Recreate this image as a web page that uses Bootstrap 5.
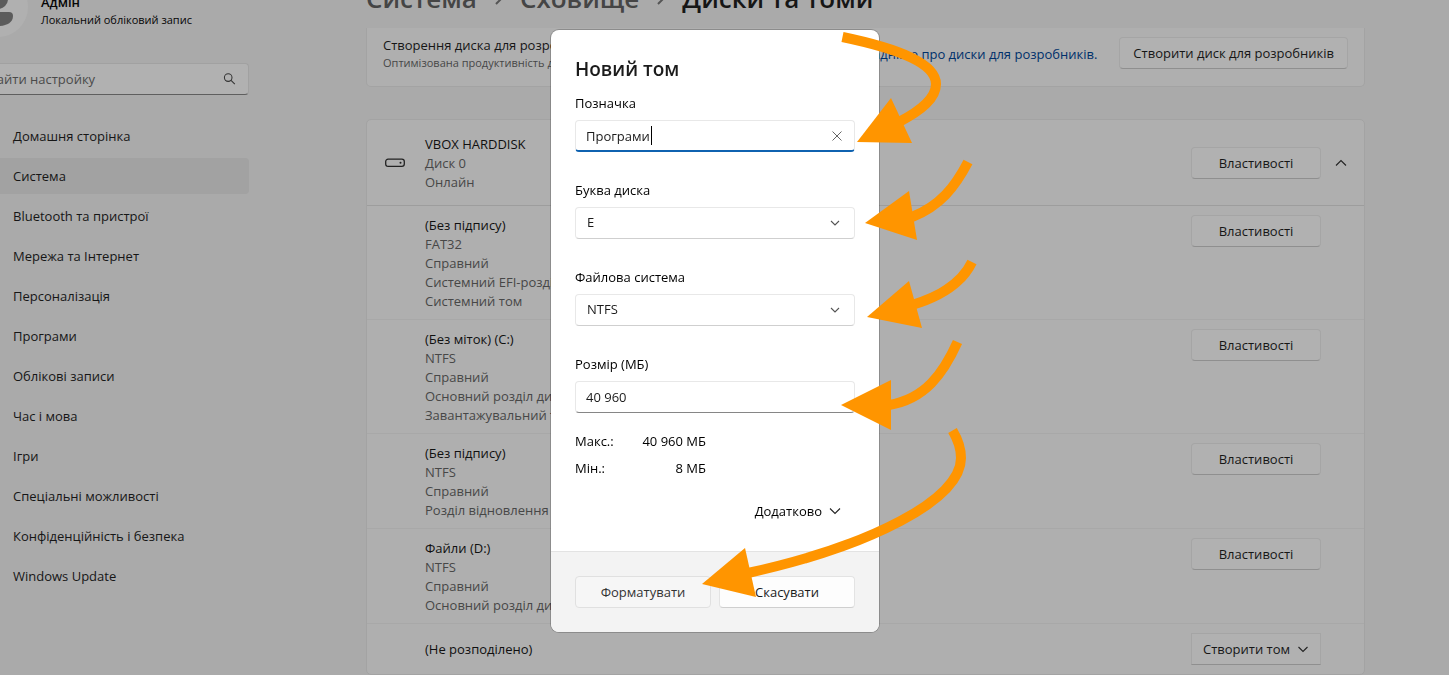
<!DOCTYPE html>
<html lang="uk">
<head>
<meta charset="utf-8">
<meta name="viewport" content="width=device-width, initial-scale=1">
<title>Диски та томи</title>
<link href="https://cdn.jsdelivr.net/npm/bootstrap@5.3.0/dist/css/bootstrap.min.css" rel="stylesheet">
<style>
  body { background: #aaa; color: #161616; font-family: "Open Sans", "Noto Sans", sans-serif; font-size: 13px; line-height: 19px; overflow: hidden; min-height: 100vh; }
  /* The window is scrolled a little: its first rows start above the edge */
  .window-view { margin-top: -24px; }
  .side-pane { width: 269px; margin-left: -20px; flex: none; }
  .profile { height: 87px; padding-top: 1px; }
  .avatar { width: 60px; height: 60px; margin-left: -12px; margin-right: 13px; flex: none; }
  .profile-text { line-height: 17px; font-size: 11px; padding-top: 17px; color: #060606; }
  .profile-name { font-size: 13px; font-weight: 600; }
  .search-box { background: #b1b1b1; border: 1px solid #a1a1a1; border-bottom-color: #5f5f5f; border-radius: 4px; height: 32px; padding: 0 12px 0 0; margin-bottom: 23px; }
  .search-box input { background: none; border: 0; outline: 0; padding: 0; width: 100%; color: #4a4a4a; }
  .search-box input::placeholder { color: #4a4a4a; opacity: 1; }
  .side-menu { gap: 4px; }
  .side-menu .nav-link { color: #161616; height: 36px; line-height: 36px; padding: 0 0 0 33px; border-radius: 4px; }
  .side-menu .nav-link.active { background: #a2a2a2; }
  .content-pane { margin: 0 84px 0 117px; min-width: 0; }
  .crumbs { height: 52px; padding-bottom: 9px; font-size: 26px; line-height: 38px; font-weight: 600; white-space: nowrap; }
  .crumbs a { color: #454545; text-decoration: none; }
  .crumbs svg { margin: 0 15px 0 16px; }
  .panel-box { background: #afafaf; border: 1px solid #a3a3a3; border-radius: 5px; }
  .dev-drive { border-top: 0; border-radius: 0 0 5px 5px; height: 59px; padding: 0 16px 8px; margin-bottom: 32px; white-space: nowrap; }
  .dev-text { padding-top: 2px; line-height: 18px; }
  .dev-sub { font-size: 11px; color: #474747; }
  .dev-drive a { color: #00306b; text-decoration: none; margin-right: 22px; padding-top: 2px; }
  .win-btn { background: #b1b1b1; border: 1px solid #a5a5a5; border-bottom-color: #8f8f8f; border-radius: 4px; color: #161616; font-size: 13px; line-height: 18px; height: 32px; padding: 0 11px; white-space: nowrap; }
  .win-btn.wide { padding: 0 13px; }
  .win-btn.fixed { width: 130px; }
  .vol-row { border-bottom: 1px solid #a8a8a8; padding: 9px 43px 8px 58px; color: #474747; }
  .vol-row:last-child { border-bottom: 0; padding-bottom: 9px; }
  .vol-info { padding-top: 1px; }
  .disk-head { border-bottom-color: #9d9d9d; height: 86px; padding: 0 16px 0 18px; }
  .disk-head .vol-info { padding-top: 2px; }
  .disk-head .disk-icon { margin-right: 20px; }
  .disk-head .win-btn { margin-right: 13px; }
  .vol-name { color: #101010; }
  .bare-btn { background: none; border: 0; padding: 0; line-height: 0; color: inherit; }
  .modal { right: 19px; width: auto; overflow: visible; }
  .modal-dialog { width: 328px; margin: 30px auto; color: #000; }
  .modal-content { border: 0; border-radius: 8px; box-shadow: 0 0 0 1px rgba(0,0,0,.2); overflow: hidden; pointer-events: auto; color: #111; }
  .modal-body { padding: 25px 24px 24px; }
  .modal-body h1 { font-size: 19px; line-height: 28px; font-weight: 600; color: #1b1b1b; margin-bottom: 10px; }
  .field { margin-bottom: 28px; }
  .field label { display: block; line-height: 20px; margin-bottom: 7px; color: #000; }
  .field-box { position: relative; }
  .field .form-control, .field .form-select { height: 32px; border: 1px solid #e8e8e8; border-radius: 4px; padding: 0 10px; font-size: 13px; color: #1b1b1b; background-color: #fff; box-shadow: none; }
  .field .form-select { border-bottom-color: #cfcfcf; padding-left: 11px; background-image: url("data:image/svg+xml,%3Csvg xmlns='http://www.w3.org/2000/svg' viewBox='0 0 10 10'%3E%3Cpath d='M1 3l4 4 4-4' fill='none' stroke='%23555' stroke-width='1.1'/%3E%3C/svg%3E"); background-size: 10px 10px; background-position: right 14px center; }
  .field .form-control { border-bottom-color: #868686; }
  .field .form-control.current { border-bottom: 2px solid #0f62b0; padding-right: 36px; }
  .clear-btn { position: absolute; right: 13px; top: 11px; color: #666; }
  .caret { position: absolute; left: 76px; top: 6px; width: 1px; height: 19px; background: #000; }
  .limits { width: 131px; line-height: 27px; margin: -13px 0 13px; color: #000; }
  .limits dt { font-weight: 400; }
  .more-btn { height: 32px; padding: 0 14px; color: #000; line-height: 20px; gap: 7px; }
  .modal-footer { background: #f3f3f3; border-top: 1px solid #e3e3e3; padding: 24px; gap: 8px; flex-wrap: nowrap; }
  .modal-footer .win-btn { background: #fdfdfd; border-color: #e3e3e3; border-bottom-color: #cfcfcf; margin: 0; flex: 1 1 0; color: #1b1b1b; }
  .modal-footer .win-btn.pressed { background: #f6f6f6; border-color: #e0e0e0; color: #333; }
  .pointers { position: absolute; left: 0; top: 0; width: 430px; height: 602px; pointer-events: none; }
</style>
</head>
<body>
<div class="window-view d-flex">
  <aside class="side-pane">
    <div class="profile d-flex align-items-start">
      <svg class="avatar" viewBox="0 0 60 60" aria-hidden="true">
        <circle cx="30" cy="30" r="30" fill="#b0b0b0"/>
        <circle cx="30" cy="22" r="10" fill="#5b5b5b"/>
        <path d="M19 35h22q4 0 4 4c0 7-7 10-15 10s-15-3-15-10q0-4 4-4z" fill="#5b5b5b"/>
      </svg>
      <div class="profile-text">
        <div class="profile-name">Адмін</div>
        <div>Локальний обліковий запис</div>
      </div>
    </div>
    <div class="search-box d-flex align-items-center">
      <input type="search" placeholder="Знайти настройку" aria-label="Знайти настройку">
      <svg width="14" height="14" viewBox="0 0 14 14" fill="none" stroke="#333" stroke-width="1.1"><circle cx="5.500" cy="5.500" r="4"/><path d="M8.500 8.500l4 4"/></svg>
    </div>
    <nav class="side-menu nav flex-column">
      <a class="nav-link" href="#">Домашня сторінка</a>
      <a class="nav-link active" href="#">Система</a>
      <a class="nav-link" href="#">Bluetooth та пристрої</a>
      <a class="nav-link" href="#">Мережа та Інтернет</a>
      <a class="nav-link" href="#">Персоналізація</a>
      <a class="nav-link" href="#">Програми</a>
      <a class="nav-link" href="#">Облікові записи</a>
      <a class="nav-link" href="#">Час і мова</a>
      <a class="nav-link" href="#">Ігри</a>
      <a class="nav-link" href="#">Спеціальні можливості</a>
      <a class="nav-link" href="#">Конфіденційність і безпека</a>
      <a class="nav-link" href="#">Windows Update</a>
    </nav>
  </aside>

  <main class="content-pane flex-grow-1">
    <div class="crumbs d-flex align-items-center">
      <a href="#">Система</a>
      <svg width="12" height="16" viewBox="0 0 12 16" fill="none" stroke="#555" stroke-width="2"><path d="M3 2l6 6-6 6"/></svg>
      <a href="#">Сховище</a>
      <svg width="12" height="16" viewBox="0 0 12 16" fill="none" stroke="#555" stroke-width="2"><path d="M3 2l6 6-6 6"/></svg>
      <span>Диски та томи</span>
    </div>

    <section class="panel-box dev-drive d-flex align-items-center">
      <div class="dev-text me-auto">
        <div>Створення диска для розробників</div>
        <div class="dev-sub">Оптимізована продуктивність для розробників</div>
      </div>
      <a href="#">Докладніше про диски для розробників.</a>
      <button type="button" class="win-btn wide">Створити диск для розробників</button>
    </section>

    <section class="panel-box">
      <div class="vol-row disk-head d-flex align-items-center">
        <svg class="disk-icon" width="20" height="10" viewBox="0 0 20 10" fill="none" stroke="#222" stroke-width="1.3"><rect x=".7" y="1.200" width="18.600" height="7.200" rx="2.400"/><circle cx="15.500" cy="4.800" r="1" fill="#222" stroke="none"/></svg>
        <div class="vol-info me-auto">
          <div class="vol-name">VBOX HARDDISK</div>
          <div>Диск 0</div>
          <div>Онлайн</div>
        </div>
        <button type="button" class="win-btn fixed">Властивості</button>
        <button type="button" class="bare-btn" aria-label="Згорнути"><svg width="14" height="10" viewBox="0 0 14 10" fill="none" stroke="#222" stroke-width="1.1"><path d="M2 7.500l5-5 5 5"/></svg></button>
      </div>
      <div class="vol-row d-flex align-items-start">
        <div class="vol-info me-auto">
          <div class="vol-name">(Без підпису)</div>
          <div>FAT32</div>
          <div>Справний</div>
          <div>Системний EFI-розділ</div>
          <div>Системний том</div>
        </div>
        <button type="button" class="win-btn fixed">Властивості</button>
      </div>
      <div class="vol-row d-flex align-items-start">
        <div class="vol-info me-auto">
          <div class="vol-name">(Без міток) (C:)</div>
          <div>NTFS</div>
          <div>Справний</div>
          <div>Основний розділ диска</div>
          <div>Завантажувальний том</div>
        </div>
        <button type="button" class="win-btn fixed">Властивості</button>
      </div>
      <div class="vol-row d-flex align-items-start">
        <div class="vol-info me-auto">
          <div class="vol-name">(Без підпису)</div>
          <div>NTFS</div>
          <div>Справний</div>
          <div>Розділ відновлення</div>
        </div>
        <button type="button" class="win-btn fixed">Властивості</button>
      </div>
      <div class="vol-row d-flex align-items-start">
        <div class="vol-info me-auto">
          <div class="vol-name">Файли (D:)</div>
          <div>NTFS</div>
          <div>Справний</div>
          <div>Основний розділ диска</div>
        </div>
        <button type="button" class="win-btn fixed">Властивості</button>
      </div>
      <div class="vol-row d-flex align-items-center">
        <div class="vol-info vol-name me-auto">(Не розподілено)</div>
        <button type="button" class="win-btn fixed rounded-0 d-flex align-items-center justify-content-between">Створити том
          <svg width="12" height="10" viewBox="0 0 12 10" fill="none" stroke="#222" stroke-width="1.1"><path d="M1.500 3l4.500 4.500 4.500-4.500"/></svg></button>
      </div>
    </section>
  </main>
</div>

<div class="modal d-block" role="dialog" aria-labelledby="dialogTitle">
  <div class="modal-dialog">
    <form class="modal-content">
      <div class="modal-body">
        <h1 id="dialogTitle">Новий том</h1>
        <div class="field">
          <label for="volLabel">Позначка</label>
          <div class="field-box">
            <input id="volLabel" class="form-control current" type="text" value="Програми">
            <span class="caret"></span>
            <button type="button" class="bare-btn clear-btn" aria-label="Очистити"><svg width="10" height="10" viewBox="0 0 10 10" fill="none" stroke="currentColor"><path d="M.5.5l9 9M9.500.5l-9 9"/></svg></button>
          </div>
        </div>
        <div class="field">
          <label for="volLetter">Буква диска</label>
          <select id="volLetter" class="form-select"><option>E</option></select>
        </div>
        <div class="field">
          <label for="volFs">Файлова система</label>
          <select id="volFs" class="form-select"><option>NTFS</option></select>
        </div>
        <div class="field">
          <label for="volSize">Розмір (МБ)</label>
          <input id="volSize" class="form-control" type="text" value="40 960">
        </div>
        <dl class="limits">
          <div class="d-flex justify-content-between"><dt>Макс.:</dt><dd class="m-0">40 960 МБ</dd></div>
          <div class="d-flex justify-content-between"><dt>Мін.:</dt><dd class="m-0">8 МБ</dd></div>
        </dl>
        <button type="button" class="bare-btn more-btn d-flex align-items-center ms-auto">Додатково
          <svg width="12" height="10" viewBox="0 0 12 10" fill="none" stroke="#222" stroke-width="1.1"><path d="M1 2.500l5 5 5-5"/></svg></button>
      </div>
      <div class="modal-footer">
        <button type="button" class="win-btn pressed">Форматувати</button>
        <button type="button" class="win-btn">Скасувати</button>
      </div>
    </form>
    <svg class="pointers" viewBox="551 30 430 602" aria-hidden="true">
      <g fill="none" stroke="#ff9500" stroke-width="10">
        <path d="M842.500 37C900 49 936 64 936 84C936 98 922 110 899 122"/>
        <path d="M968 162C955 187 940 206 912 217"/>
        <path d="M972 262C962 283 942 296 912 305"/>
        <path d="M957.500 342C943 374 925 399 889 405"/>
        <path d="M952.500 430.500C960 443 961 452 961 458C961 500 870 546 748 573"/>
      </g>
      <g fill="#ff9500">
        <path d="M857 142L891 98L912 143z"/>
        <path d="M865 223L909 191L917 240z"/>
        <path d="M867 317L909 281L922 328z"/>
        <path d="M841 405L891 380L891 430z"/>
        <path d="M702 584L745 548L756 597z"/>
      </g>
    </svg>
  </div>
</div>
<script src="https://cdn.jsdelivr.net/npm/bootstrap@5.3.0/dist/js/bootstrap.bundle.min.js"></script>
</body>
</html>
